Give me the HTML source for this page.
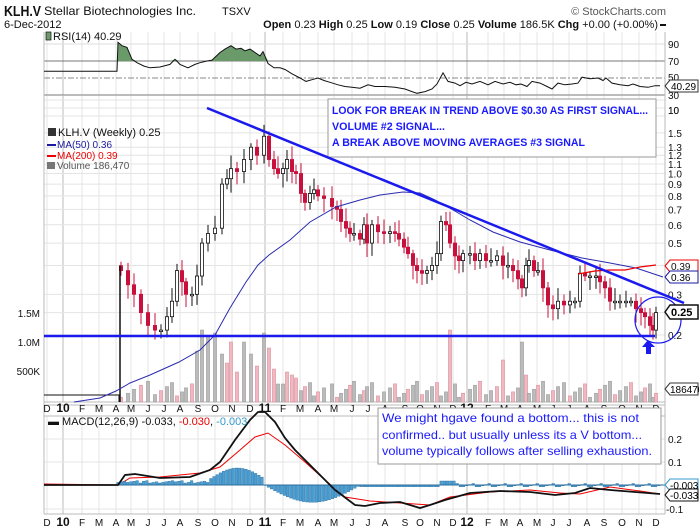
<!DOCTYPE html>
<html><head><meta charset="utf-8"><style>
html,body{margin:0;padding:0;background:#fff;width:699px;height:530px;overflow:hidden}
svg{display:block;font-family:"Liberation Sans",sans-serif}
</style></head><body>
<svg id="s" width="699" height="530" viewBox="0 0 699 530" xmlns="http://www.w3.org/2000/svg">
<rect width="699" height="530" fill="#fff"/>
<g id="grid"></g>
<g id="dyn"></g>
<g id="lbl" font-size="10" fill="#111"></g>
<!-- header -->
<text x="4" y="16" font-size="15" font-weight="bold" fill="#111" textLength="37" lengthAdjust="spacingAndGlyphs">KLH.V</text>
<text x="44" y="15" font-size="12" fill="#111" textLength="152" lengthAdjust="spacingAndGlyphs">Stellar Biotechnologies Inc.</text>
<text x="222" y="15" font-size="11" fill="#111">TSXV</text>
<text x="666" y="15" font-size="11" fill="#555" text-anchor="end">© StockCharts.com</text>
<text x="4" y="28" font-size="11" fill="#111">6-Dec-2012</text>
<text x="658" y="28" font-size="11" fill="#111" text-anchor="end"><tspan font-weight="bold">Open</tspan> 0.23 <tspan font-weight="bold">High</tspan> 0.25 <tspan font-weight="bold">Low</tspan> 0.19 <tspan font-weight="bold">Close</tspan> 0.25 <tspan font-weight="bold">Volume</tspan> 186.5K <tspan font-weight="bold">Chg</tspan> +0.00 (+0.00%)</text>
<rect x="660" y="24" width="6" height="2" fill="#111"/>
<text x="53" y="40" font-size="11" fill="#111">RSI(14) 40.29</text>
<g font-size="10" fill="#111"><text x="668" y="48">90</text><text x="668" y="65">70</text><text x="668" y="81">50</text><text x="668" y="99">30</text><text x="668" y="114">10</text>
<text x="668" y="443">0.2</text><text x="668" y="466">0.1</text><text x="666" y="513">-0.1</text>
<text x="40" y="317" text-anchor="end">1.5M</text><text x="40" y="346" text-anchor="end">1.0M</text><text x="40" y="375" text-anchor="end">500K</text></g>
<g font-size="11"><text x="58" y="136" fill="#111">KLH.V (Weekly) 0.25</text></g>
<rect x="48" y="128" width="8" height="8" fill="#333"/>
<g font-size="10"><rect x="47" y="144" width="9" height="2" fill="#1a1aa0"/><text x="57" y="148" fill="#1a1aa0">MA(50) 0.36</text>
<rect x="47" y="155" width="9" height="2" fill="#e00"/><text x="57" y="159" fill="#e00">MA(200) 0.39</text>
<rect x="47" y="162" width="8" height="7" fill="#777"/><text x="57" y="169" fill="#555">Volume 186,470</text></g>
<text x="48" y="425" font-size="11" fill="#111">▬ MACD(12,26,9) -0.033, <tspan fill="#e00">-0.030</tspan>, <tspan fill="#39c">-0.003</tspan></text>
<g id="axes" font-size="10" fill="#111"></g>
<rect x="328" y="99" width="328" height="58" fill="#fff" stroke="#999"/>
<g font-size="11" font-weight="bold" fill="#1a1aff"><text x="332" y="114" textLength="316" lengthAdjust="spacingAndGlyphs">LOOK FOR BREAK IN TREND ABOVE $0.30 AS FIRST SIGNAL...</text>
<text x="332" y="130" textLength="113" lengthAdjust="spacingAndGlyphs">VOLUME #2 SIGNAL...</text>
<text x="332" y="146" textLength="253" lengthAdjust="spacingAndGlyphs">A BREAK ABOVE MOVING AVERAGES #3 SIGNAL</text></g>
<rect x="378" y="408" width="283" height="56" fill="#fff" stroke="#999"/>
<g font-size="12" fill="#1a1aff"><text x="382" y="422" textLength="257" lengthAdjust="spacingAndGlyphs">We might hgave found a bottom... this is not</text>
<text x="382" y="439" textLength="260" lengthAdjust="spacingAndGlyphs">confirmed.. but usually unless its a V bottom...</text>
<text x="382" y="455" textLength="270" lengthAdjust="spacingAndGlyphs">volume typically follows after selling exhaustion.</text></g>
<line x1="207" y1="108" x2="684" y2="303" stroke="#1a1aee" stroke-width="2.5"/>
<line x1="44" y1="336" x2="655" y2="336" stroke="#1a1aee" stroke-width="2.5"/>
<circle cx="658" cy="320" r="23" fill="none" stroke="#1a1aee" stroke-width="1.2"/>
<path d="M648 340 L642 347 L646 347 L646 354 L651 354 L651 347 L655 347 Z" fill="#1a1aee"/>
<g font-size="10"><path d="M665 86 L670 80 L698 80 L698 92 L670 92 Z" fill="#fff" stroke="#333"/><text x="671" y="90">40.29</text>
<path d="M665 266 L670 260 L698 260 L698 272 L670 272 Z" fill="#fff" stroke="#e00"/><text x="671" y="270" fill="#111">0.39</text>
<path d="M665 277 L670 271 L698 271 L698 283 L670 283 Z" fill="#fff" stroke="#1a1aa0"/><text x="671" y="281">0.36</text>
<path d="M665 312 L670 305 L698 305 L698 319 L670 319 Z" fill="#fff" stroke="#111" stroke-width="1.5"/><text x="671" y="316" font-weight="bold" font-size="11">0.25</text>
<path d="M665 389 L670 383 L698 383 L698 395 L670 395 Z" fill="#fff" stroke="#333"/><text x="670" y="393">186470</text>
<path d="M665 485 L670 479 L698 479 L698 491 L670 491 Z" fill="#fff" stroke="#39c"/><text x="670" y="489">-0.003</text>
<path d="M665 495 L670 489 L698 489 L698 501 L670 501 Z" fill="#fff" stroke="#111"/><text x="670" y="499">-0.033</text></g>
</svg>
<script>
var NS="http://www.w3.org/2000/svg";
function el(p,t,a){var e=document.createElementNS(NS,t);for(var k in a)e.setAttribute(k,a[k]);p.appendChild(e);return e;}
var G=document.getElementById('grid'),D=document.getElementById('dyn'),A=document.getElementById('axes'),LB=document.getElementById('lbl');
var L=44,R=665;
var months=[[47,"D"],[63,"10"],[82,"F"],[99,"M"],[116,"A"],[131,"M"],[148,"J"],[164,"J"],[180,"A"],[198,"S"],[215,"O"],[232,"N"],[250,"D"],[265,"11"],[283,"F"],[300,"M"],[318,"A"],[334,"M"],[352,"J"],[368,"J"],[385,"A"],[405,"S"],[420,"O"],[437,"N"],[453,"D"],[467,"12"],[488,"F"],[504,"M"],[520,"A"],[537,"M"],[553,"J"],[569,"J"],[587,"A"],[604,"S"],[622,"O"],[639,"N"],[656,"D"]];
months.forEach(function(m){var big=m[1].length==2;
[[32,95],[96,402],[416,514]].forEach(function(r){el(G,'line',{x1:m[0],x2:m[0],y1:r[0],y2:r[1],stroke:big?'#bbb':'#e4e4e4','stroke-width':1});});
[412,526].forEach(function(y){var t=el(A,'text',{x:m[0],y:y,'text-anchor':'middle','font-weight':big?'bold':'normal','font-size':big?12:10});t.textContent=m[1];});});
function py(p){return 335-231*Math.log10(p/0.2);}
[0.2,0.25,0.3,0.4,0.5,0.6,0.7,0.8,0.9,1.0,1.1,1.2,1.3,1.5].forEach(function(p){el(G,'line',{x1:L,x2:R,y1:py(p),y2:py(p),stroke:'#e4e4e4'});});
[["1.5",1.5],["1.3",1.3],["1.2",1.2],["1.1",1.1],["1.0",1.0],["0.9",0.9],["0.8",0.8],["0.7",0.7],["0.6",0.6],["0.5",0.5],["0.3",0.3],["0.2",0.2]].forEach(function(l){var t=el(LB,'text',{x:668,y:(py(l[1])+4).toFixed(1)});t.textContent=l[0];});
var t10=el(LB,'text',{x:668,y:114});t10.textContent="10";
[100,108,116].forEach(function(y){el(G,'line',{x1:L,x2:R,y1:y,y2:y,stroke:'#e4e4e4'});});
[439,462,509].forEach(function(y){el(G,'line',{x1:L,x2:R,y1:y,y2:y,stroke:'#e4e4e4'});});
el(G,'line',{x1:L,x2:R,y1:44,y2:44,stroke:'#ddd'});
el(G,'line',{x1:L,x2:R,y1:61,y2:61,stroke:'#777'});
el(G,'line',{x1:L,x2:R,y1:95,y2:95,stroke:'#777'});
el(G,'line',{x1:L,x2:R,y1:78,y2:78,stroke:'#888','stroke-dasharray':'6,2,2,2'});
el(G,'line',{x1:L,x2:L,y1:32,y2:514,stroke:'#bbb'});el(G,'line',{x1:R,x2:R,y1:32,y2:514,stroke:'#bbb'});
[402,405,416,514].forEach(function(y){el(G,'line',{x1:L,x2:R,y1:y,y2:y,stroke:'#bbb'});});
var rsi=[[44,58],[117,58],[118,92],[122,88],[127,86],[132,72],[137,68],[144,64],[150,62],[160,63],[170,66],[175,72],[180,66],[188,62],[195,66],[200,68],[207,70],[212,71],[220,80],[225,84],[231,88],[236,84],[241,85],[245,82],[250,84],[255,80],[260,76],[263,81],[268,67],[274,62],[280,62],[285,60],[292,55],[300,50],[306,46],[312,48],[318,50],[324,47],[330,45],[338,42],[345,40],[352,39],[360,38],[368,42],[375,40],[385,40],[395,39],[405,37],[412,34],[417,32],[425,34],[432,37],[437,43],[443,56],[448,46],[455,44],[460,41],[466,45],[472,43],[480,46],[488,42],[495,46],[503,43],[510,45],[516,42],[521,43],[527,40],[532,46],[540,44],[547,40],[552,37],[558,44],[565,42],[572,43],[578,44],[582,51],[590,49],[598,50],[603,47],[606,50],[612,44],[620,42],[628,41],[633,43],[640,40],[648,39],[655,41],[660,41]];
function ry(v){return 95-(v-30)*0.85;}
var pts=rsi.map(function(p){return p[0]+','+ry(p[1]).toFixed(1);}).join(' ');
var fillPts=rsi.filter(function(p){return p[0]>=117&&p[0]<=270;}).map(function(p){return p[0]+','+Math.min(ry(p[1]),61).toFixed(1);});
el(D,'polygon',{points:'117,61 '+fillPts.join(' ')+' 270,61',fill:'#6a9a6a'});
el(D,'polyline',{points:pts,fill:'none',stroke:'#111','stroke-width':1});
el(D,'rect',{x:46,y:32,width:5,height:8,fill:'#6a9a6a',stroke:'#111','stroke-width':0.7});
var P=[[121,0.38],[128,0.33],[134,0.3],[141,0.25],[148,0.22],[155,0.21],[161,0.21],[167,0.24],[172,0.28],[177,0.38],[182,0.34],[186,0.3],[192,0.3],[197,0.36],[202,0.5],[208,0.55],[215,0.58],[222,0.9],[227,0.95],[231,1.05],[237,1.02],[244,1.15],[251,1.3],[257,1.2],[264,1.45],[269,1.15],[274,1.05],[278,1.0],[283,1.05],[287,1.15],[292,1.02],[296,1.0],[301,0.82],[305,0.75],[310,0.82],[314,0.85],[318,0.8],[324,0.78],[332,0.72],[337,0.7],[341,0.62],[346,0.58],[350,0.55],[354,0.55],[360,0.52],[364,0.6],[367,0.5],[372,0.6],[378,0.56],[384,0.55],[390,0.56],[395,0.55],[399,0.52],[404,0.48],[408,0.45],[413,0.4],[417,0.38],[422,0.37],[427,0.38],[432,0.4],[437,0.45],[441,0.62],[446,0.6],[450,0.5],[455,0.44],[459,0.42],[463,0.45],[470,0.45],[475,0.42],[480,0.45],[486,0.42],[491,0.42],[497,0.44],[503,0.4],[508,0.4],[513,0.38],[518,0.35],[522,0.32],[526,0.4],[529,0.42],[534,0.38],[538,0.38],[543,0.32],[548,0.27],[553,0.26],[558,0.28],[564,0.27],[570,0.28],[575,0.28],[580,0.37],[585,0.36],[590,0.36],[596,0.36],[600,0.34],[605,0.32],[610,0.28],[615,0.28],[620,0.28],[626,0.28],[631,0.28],[636,0.26],[641,0.25],[645,0.24],[650,0.22],[653,0.21],[656,0.25]];
function vy(v){return 402-v*60;}
var vol=[[198,0.85,1],[202,1.2,1],[208,1.1,1],[215,1.15,1],[222,0.8,1],[227,0.65,0],[231,1.0,0],[237,0.5,0],[244,1.0,1],[251,0.8,1],[257,0.6,0],[264,1.15,1],[269,0.9,0],[274,0.55,0],[278,0.3,1],[283,0.3,1],[287,0.5,0],[292,0.45,0],[296,0.4,0],[450,1.2,0],[466,0.65,1],[503,0.7,0],[522,1.0,1],[526,0.45,0]];
P.forEach(function(p,i){
 var x=p[0],c=p[1],o=i?P[i-1][1]:c*1.05;
 var up=c>=o;
 var hi=Math.max(o,c)*(1.04+((i*37)%11)/100),lo=Math.min(o,c)*(0.95-((i*53)%9)/100);
 var v=0.08+((i*29)%13)/45,gray=((i*7)%3)!=0;
 vol.forEach(function(q){if(Math.abs(q[0]-x)<2.5){v=q[1];gray=q[2]==1;}});
 el(D,'rect',{x:x-1.6,y:vy(v),width:3.2,height:402-vy(v),fill:gray?'#bbb':'#f0b8c0',stroke:gray?'#999':'#d88a96','stroke-width':0.5});
 el(D,'line',{x1:x,x2:x,y1:py(hi),y2:py(lo),stroke:up?'#111':'#c8103c','stroke-width':1});
 var t=Math.min(py(o),py(c)),h=Math.max(1.5,Math.abs(py(o)-py(c)));
 el(D,'rect',{x:x-1.6,y:t,width:3.2,height:h,fill:up?'#fff':'#c8103c',stroke:up?'#111':'#c8103c','stroke-width':0.8});
});
el(D,'line',{x1:120,x2:120,y1:py(0.4),y2:402,stroke:'#111','stroke-width':1.5});
el(D,'polyline',{points:'44,395 119,395 119,402',fill:'none',stroke:'#111','stroke-width':1});
el(D,'polyline',{points:'74,402 100,398 116,391 130,383 150,375 179,362 200,350 215,335 230,308 246,282 258,265 269,255 290,240 310,222 336,207 360,200 380,195 403,192 420,193 435,200 448,207 470,220 493,232 520,242 550,250 582,258 610,263 636,268 663,277',fill:'none',stroke:'#2a2ab0','stroke-width':1});
el(D,'polyline',{points:'578,274 595,271 610,270 625,270 640,267 656,265',fill:'none',stroke:'#e00','stroke-width':1.2});
el(D,'polyline',{points:'44,484 118,485 130,478 160,477 200,473 220,467 240,450 255,437 268,433 285,445 305,462 325,480 345,497 370,501 400,503 430,505 450,497 490,492 530,490 560,493 580,494 610,487 640,491 660,494',fill:'none',stroke:'#e00','stroke-width':1});
for(var x=118;x<=660;x+=3.2){
 var h=0;
 if(x<210)h=2+((Math.round(x)*7)%5)*0.6; else if(x<=265)h=6+Math.sin((x-210)/55*Math.PI)*11; else if(x<360)h=-Math.sin((x-265)/95*Math.PI)*17; else if(x<440)h=-1.5; else if(x<455)h=4; else h=((Math.round(x)*3)%4)-1.5;
 el(D,'rect',{x:x-1.3,y:h>0?485-h:485,width:2.6,height:Math.abs(h)+0.3,fill:'#4a9fd4',stroke:'#2a6f9f','stroke-width':0.4});
}
el(D,'line',{x1:L,x2:R,y1:485,y2:485,stroke:'#2a6f9f','stroke-width':1});
el(D,'polyline',{points:'44,485 118,485 125,475 135,474 160,478 190,477 210,470 220,462 235,440 250,420 258,412 265,412 275,422 285,438 295,450 315,470 335,490 355,505 365,506 380,503 400,502 420,508 430,505 445,500 470,493 500,491 530,492 555,495 575,493 590,488 610,490 635,492 660,494',fill:'none',stroke:'#111','stroke-width':1.8});
var s=document.getElementById('s');
Array.prototype.slice.call(s.childNodes).forEach(function(n){if(n.nodeType==1&&n!==G&&n!==D&&!(n.tagName=='rect'&&n.getAttribute('width')=='699'))s.appendChild(n);});
</script>
</body></html>
